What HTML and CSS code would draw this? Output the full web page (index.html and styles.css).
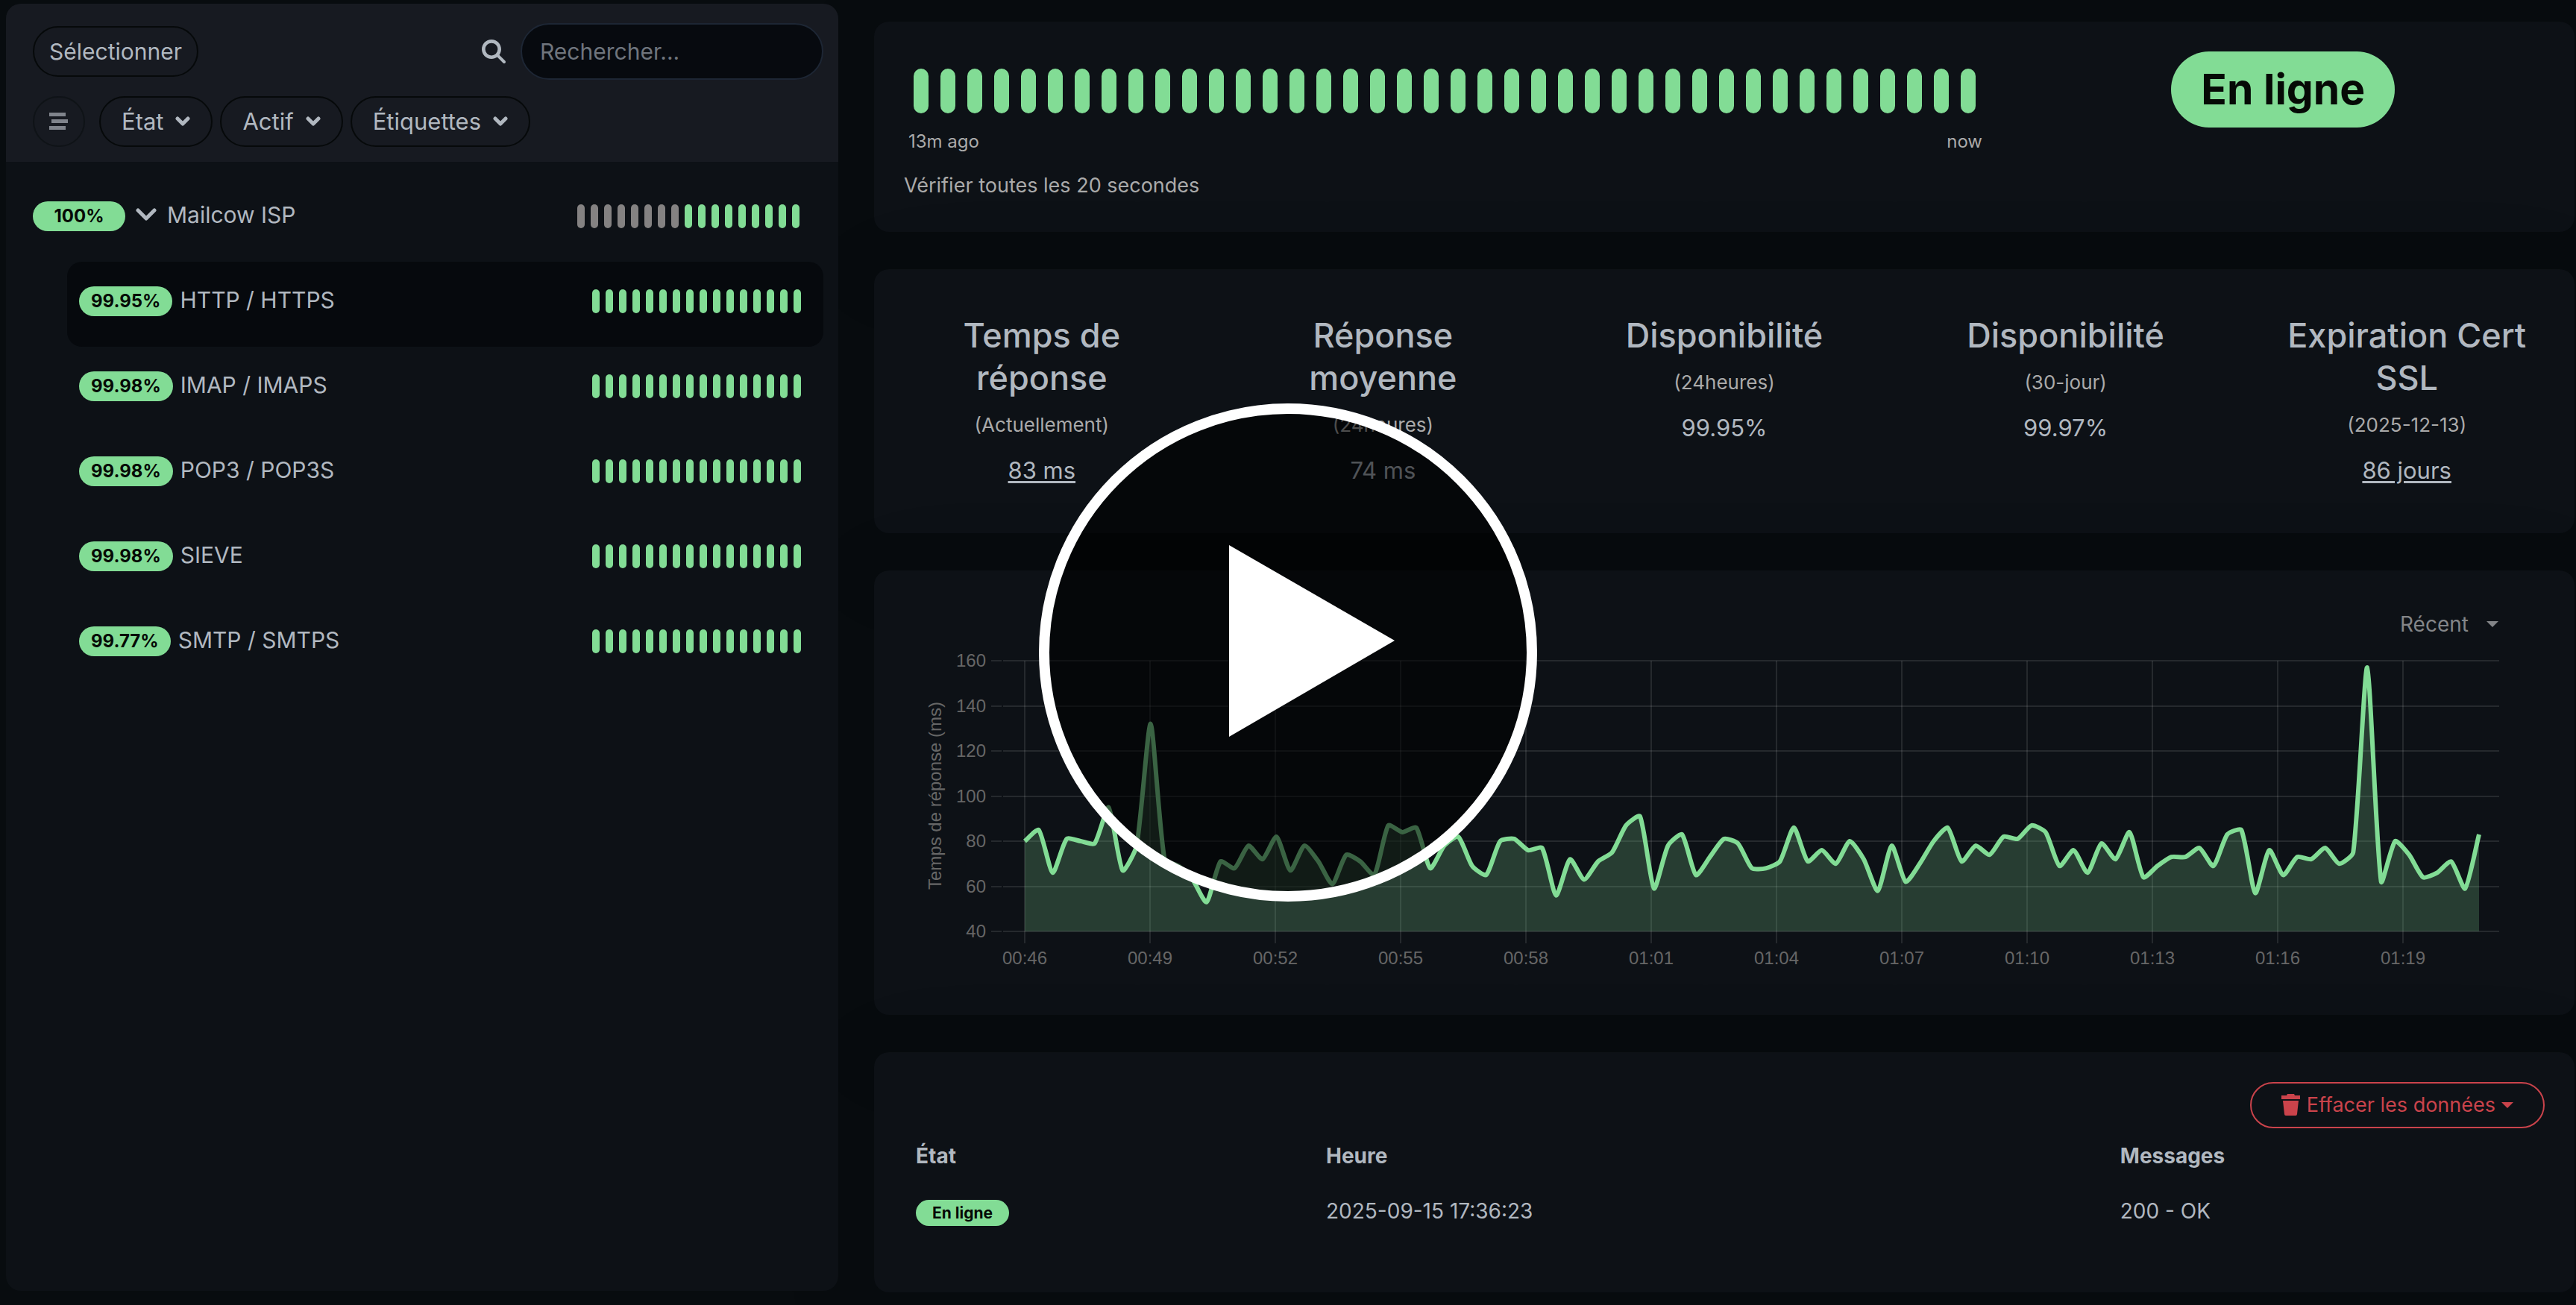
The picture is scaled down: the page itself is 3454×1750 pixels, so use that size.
FILE: index.html
```html
<!DOCTYPE html>
<html lang="fr">
<head>
<meta charset="utf-8">
<meta name="viewport" content="width=device-width, initial-scale=1">
<title>HTTP / HTTPS</title>
<link rel="stylesheet" href="styles.css">
</head>
<body>
<div class="layout">
  <aside class="sidebar">
    <header class="toolbar">
      <div class="toolbar-row">
        <button type="button" class="pill-btn pill-btn-select">Sélectionner</button>
        <form class="search" role="search">
          <label for="search" aria-label="Rechercher">
            <svg class="icon-search" viewBox="0 0 512 512"><path fill="currentColor" d="M416 208c0 45.900-14.900 88.300-40 122.700l126.600 126.700c12.500 12.500 12.500 32.800 0 45.300s-32.800 12.500-45.300 0L330.700 376C296.300 401.100 253.900 416 208 416 93.100 416 0 322.900 0 208S93.100 0 208 0s208 93.100 208 208zM208 342a134 134 0 1 0 0-268 134 134 0 1 0 0 268z"/></svg>
          </label>
          <input id="search" class="search-input" type="text" placeholder="Rechercher...">
        </form>
      </div>
      <div class="toolbar-row filters">
        <button type="button" class="pill-btn pill-btn-icon" aria-label="Trier">
          <svg class="icon-list" viewBox="0 0 28 24"><path fill="currentColor" d="M1 0h22v5H1zM4 9h22v5H4zM1 18h22v5H1z"/></svg>
        </button>
        <button type="button" class="pill-btn">État <svg class="chevron" viewBox="0 0 20 14"><path d="M3 3l7 7 7-7"/></svg></button>
        <button type="button" class="pill-btn">Actif <svg class="chevron" viewBox="0 0 20 14"><path d="M3 3l7 7 7-7"/></svg></button>
        <button type="button" class="pill-btn">Étiquettes <svg class="chevron" viewBox="0 0 20 14"><path d="M3 3l7 7 7-7"/></svg></button>
      </div>
    </header>
    <nav class="monitors">
      <a href="#" class="monitor monitor-group">
        <span class="uptime uptime-group">100%</span>
        <svg class="chevron chevron-group" viewBox="0 0 28 18"><path d="M3 3l11 11 11-11"/></svg>
        <span class="name">Mailcow ISP</span>
        <span class="beats" data-pending="8" data-up="9"></span>
      </a>
      <a href="#" class="monitor active"><span class="uptime">99.95%</span><span class="name">HTTP / HTTPS</span><span class="beats" data-up="16"></span></a>
      <a href="#" class="monitor"><span class="uptime">99.98%</span><span class="name">IMAP / IMAPS</span><span class="beats" data-up="16"></span></a>
      <a href="#" class="monitor"><span class="uptime">99.98%</span><span class="name">POP3 / POP3S</span><span class="beats" data-up="16"></span></a>
      <a href="#" class="monitor"><span class="uptime">99.98%</span><span class="name">SIEVE</span><span class="beats" data-up="16"></span></a>
      <a href="#" class="monitor"><span class="uptime">99.77%</span><span class="name">SMTP / SMTPS</span><span class="beats" data-up="16"></span></a>
    </nav>
  </aside>

  <main class="details">
    <section class="card status">
      <div class="history">
        <div class="beats beats-large" data-up="40"></div>
        <div class="range"><span>13m ago</span><span>now</span></div>
        <p class="interval">Vérifier toutes les 20 secondes</p>
      </div>
      <div class="status-side"><span class="status-badge">En ligne</span></div>
    </section>

    <section class="card stats">
      <div class="stats-row">
        <div class="stat"><h4>Temps de<br>réponse</h4><p class="note">(Actuellement)</p><a href="#" class="value">83 ms</a></div>
        <div class="stat"><h4>Réponse<br>moyenne</h4><p class="note">(24heures)</p><span class="value">74 ms</span></div>
        <div class="stat"><h4>Disponibilité</h4><p class="note">(24heures)</p><span class="value">99.95%</span></div>
        <div class="stat"><h4>Disponibilité</h4><p class="note">(30-jour)</p><span class="value">99.97%</span></div>
        <div class="stat"><h4>Expiration Cert<br>SSL</h4><p class="note">(2025-12-13)</p><a href="#" class="value">86 jours</a></div>
      </div>
    </section>

    <section class="card chart-card">
      <div class="period">
        <select class="period-select" aria-label="Période"><option>Récent</option></select>
        <svg class="caret" viewBox="0 0 16 8"><path fill="currentColor" d="M0 0h16L8 8z"/></svg>
      </div>
      <svg class="chart" id="chart" viewBox="0 0 2280 452" role="img" aria-label="Temps de réponse (ms)">
        <g id="grid" class="grid"></g>
        <path id="area" class="area"/>
        <path id="line" class="line"/>
        <g id="labels" class="labels"></g>
        <text class="axis-title" text-anchor="middle" transform="translate(90 208) rotate(-90)">Temps de réponse (ms)</text>
      </svg>
    </section>

    <section class="card events">
      <div class="events-actions">
        <button type="button" class="clear-btn">
          <svg class="icon-trash" viewBox="0 0 26 30"><path fill="currentColor" d="M8 0h9l1 2h7v5H0V2h7zM2 9h21l-2 18q0 2-2 2H6q-2 0-2-2z"/></svg>
          Effacer les données
          <svg class="caret" viewBox="0 0 16 8"><path fill="currentColor" d="M0 0h16L8 8z"/></svg>
        </button>
      </div>
      <table class="events-table">
        <colgroup><col class="col-state"><col class="col-time"><col></colgroup>
        <thead><tr><th>État</th><th>Heure</th><th>Messages</th></tr></thead>
        <tbody><tr><td><span class="event-badge">En ligne</span></td><td>2025-09-15 17:36:23</td><td>200 - OK</td></tr></tbody>
      </table>
    </section>
  </main>
</div>

<button type="button" class="play" aria-label="Lire la vidéo">
  <svg viewBox="0 0 668 668"><circle cx="334" cy="334" r="327" fill="#000" fill-opacity=".55" stroke="#fff" stroke-width="14"/><path fill="#fff" d="M255 190l222 128-222 129z"/></svg>
</button>
<script src="script.js"></script>
</body>
</html>
```
FILE: styles.css
```css
* { box-sizing: border-box; }

:root {
  --page: #080c0f;
  --card: #0d1116;
  --header: #171a21;
  --up: #82dc95;
  --pending: #848282;
  --text: #b1b8c0;
  --muted: #aaa;
  --danger: #ca434b;
}

body {
  margin: 0;
  background: var(--page);
  color: var(--text);
  font: 31px/48px Inter, "Liberation Sans", sans-serif;
}

button, input, select { font: inherit; color: inherit; }
a { color: inherit; text-decoration: none; }
h4, p { margin: 0; }
svg { display: block; flex: none; }

.layout {
  display: grid;
  grid-template-columns: minmax(0, 1116fr) minmax(0, 2280fr);
  gap: 48px;
  min-height: 100vh;
  padding: 5px 2px 17px 8px;
}

/* Sidebar */
.sidebar {
  position: relative;
  z-index: 1;
  margin-bottom: 2px;
  border-radius: 20px;
  background: var(--card);
  overflow: hidden;
}

.toolbar {
  display: flex;
  flex-direction: column;
  gap: 22px;
  padding: 26px 20px 20px 36px;
  background: var(--header);
}

.toolbar-row {
  display: flex;
  align-items: center;
  justify-content: space-between;
}

.filters { justify-content: flex-start; gap: 10px; }

.pill-btn {
  display: flex;
  align-items: center;
  gap: 16px;
  height: 68px;
  padding: 0 28px;
  border: 2px solid #06090a;
  border-radius: 34px;
  background: none;
  white-space: nowrap;
}

.pill-btn-select { padding: 0 20px; font-size: 30px; }

.pill-btn-icon {
  justify-content: center;
  width: 70px;
  margin-right: 9px;
  padding: 0;
  border-color: #0f1317;
  color: #80848c;
}

.icon-list { width: 28px; height: 24px; }

.chevron {
  width: 20px;
  height: 14px;
  fill: none;
  stroke: currentColor;
  stroke-width: 5;
  stroke-linecap: round;
  stroke-linejoin: round;
}

.search { display: flex; align-items: center; gap: 20px; }
.icon-search { width: 32px; height: 32px; }

.search-input {
  width: 406px;
  height: 76px;
  padding: 0 24px;
  border: 2px solid #1d2634;
  border-radius: 38px;
  background: #070a0f;
  font-size: 30px;
}

.search-input::placeholder { color: #6f757d; opacity: 1; }

.monitors { padding: 20px; }

.monitor {
  display: flex;
  align-items: center;
  gap: 10px;
  height: 114px;
  margin-left: 62px;
  padding: 0 30px 8px 16px;
  border-radius: 20px;
}

.monitor-group { gap: 14px; margin-left: 0; padding-right: 32px; }
.monitor.active { background: #06090d; }

.uptime {
  padding: 0 16px;
  border-radius: 20px;
  background: var(--up);
  color: #060a06;
  font-size: 24px;
  font-weight: 700;
  line-height: 40px;
}

.uptime-group { width: 124px; text-align: center; }
.chevron-group { width: 28px; height: 18px; margin-bottom: 4px; stroke-width: 5; }

.name { flex: 1; padding-bottom: 4px; font-size: 30px; }

.beats { display: flex; gap: 8px; }

.beat {
  width: 10px;
  height: 32px;
  border-radius: 5px;
  background: var(--up);
}

.beat-pending { background: var(--pending); }

/* Details */
.details {
  display: flex;
  flex-direction: column;
  gap: 50px;
  padding-top: 24px;
}

.card {
  border-radius: 20px;
  background: var(--card);
  box-shadow: 0 30px 140px rgba(0, 0, 0, .1);
}

.status {
  display: grid;
  grid-template-columns: 2fr 1fr;
  min-height: 282px;
  padding: 40px 16px;
}

.history { padding: 23px 24px 0; }
.beats-large { gap: 16px; padding-left: 13px; }
.beats-large .beat { width: 20px; height: 60px; border-radius: 10px; }

.range {
  display: flex;
  justify-content: space-between;
  max-width: 1446px;
  margin-top: 20px;
  padding-left: 6px;
  color: var(--muted);
  font-size: 24px;
  line-height: 36px;
}

.interval { margin-top: 20px; color: var(--muted); font-size: 27px; line-height: 42px; }

.status-side { text-align: center; }

.status-badge {
  display: inline-block;
  padding: 0 40px;
  border-radius: 51px;
  background: var(--up);
  color: #060a06;
  font-size: 57px;
  font-weight: 700;
  line-height: 102px;
}

.stats { padding: 60px 0; text-align: center; }

.stats-row {
  display: grid;
  grid-template-columns: repeat(5, minmax(0, 1fr));
  margin: 0 -4px;
}

.stat h4 { font-size: 45px; font-weight: 500; line-height: 57px; }
.stat .note { margin-top: 14px; color: var(--muted); font-size: 26px; line-height: 42px; }
.stat .value { display: block; margin-top: 16px; }
.stat a.value { text-decoration: underline; text-underline-offset: 3px; text-decoration-thickness: 3px; }

.chart-card { padding-bottom: 50px; }

.period {
  display: flex;
  align-items: center;
  justify-content: flex-end;
  gap: 24px;
  padding: 48px 102px 0 0;
  color: #838588;
}

.period-select {
  appearance: none;
  height: 42px;
  padding: 0;
  border: 0;
  background: none;
  font-size: 28px;
}

.caret { width: 16px; height: 8px; }
.period .caret { margin-top: 6px; }

.chart { width: 100%; height: auto; margin-top: 4px; }
.grid { stroke: #fff; stroke-opacity: .1; stroke-width: 2; }
.area { fill: var(--up); fill-opacity: .22; }
.line { fill: none; stroke: var(--up); stroke-width: 6; stroke-linejoin: round; }
.labels, .axis-title { fill: #666; font: 24px "Liberation Sans", Arial, sans-serif; }

.events { min-height: 322px; padding: 40px; }
.events-actions { display: flex; justify-content: flex-end; }

.clear-btn {
  display: flex;
  align-items: center;
  gap: 8px;
  height: 62px;
  padding: 0 40px;
  border: 2px solid var(--danger);
  border-radius: 31px;
  background: none;
  color: var(--danger);
  font-size: 27px;
}

.icon-trash { width: 26px; height: 30px; }

.events-table {
  width: 100%;
  border-collapse: collapse;
  table-layout: fixed;
  font-size: 28px;
  line-height: 42px;
}

.col-state { width: 25%; }
.col-time { width: 48.4%; }
.events-table th, .events-table td { padding: 16px; text-align: left; }

.event-badge {
  display: inline-block;
  padding: 0 22px;
  border-radius: 18px;
  background: var(--up);
  color: #060a06;
  font-size: 21px;
  font-weight: 700;
  line-height: 35px;
}

/* Video overlay */
.play {
  position: fixed;
  top: 50%;
  left: 50%;
  z-index: 2;
  width: 668px;
  height: 668px;
  padding: 0;
  border: 0;
  border-radius: 50%;
  background: none;
  transform: translate(-50%, -50%);
}
```
FILE: script.js
```js
// Heartbeat bars
document.querySelectorAll('.beats').forEach(function (el) {
  var pending = Number(el.dataset.pending || 0);
  var total = pending + Number(el.dataset.up);
  for (var i = 0; i < total; i++) {
    var beat = document.createElement('span');
    beat.className = i < pending ? 'beat beat-pending' : 'beat';
    el.appendChild(beat);
  }
});

// Response time chart
var values = [80, 85, 66, 81, 80, 79, 95, 67, 78, 132, 72, 69, 63, 53, 71, 68, 78, 72, 82, 67,
  78, 71, 61, 74, 71, 65, 87, 84, 86, 68, 78, 82, 69, 65, 80, 81, 76, 77, 56, 72,
  63, 71, 75, 87, 91, 59, 78, 83, 65, 73, 81, 79, 68, 68, 71, 86, 71, 76, 70, 80,
  72, 58, 78, 62, 70, 80, 86, 71, 78, 74, 82, 81, 87, 84, 69, 76, 66, 79, 72, 84,
  64, 69, 73, 73, 77, 69, 83, 85, 57, 76, 65, 73, 72, 77, 70, 75, 157, 62, 80, 74,
  64, 66, 71, 59, 83];
var times = ['00:46', '00:49', '00:52', '00:55', '00:58', '01:01', '01:04', '01:07', '01:10', '01:13', '01:16', '01:19'];
var left = 202, right = 2179, ceiling = 27, bottom = 390, step = 18.75;

function y(v) { return bottom - (v - 40) * (bottom - ceiling) / 120; }

function add(parent, name, attrs, text) {
  var el = document.createElementNS('http://www.w3.org/2000/svg', name);
  for (var key in attrs) el.setAttribute(key, attrs[key]);
  if (text) el.textContent = text;
  document.getElementById(parent).appendChild(el);
}

for (var v = 40; v <= 160; v += 20) {
  var gy = Math.round(y(v));
  add('grid', 'line', { x1: 157, x2: 171, y1: gy, y2: gy });
  add('grid', 'line', { x1: 173, x2: right, y1: gy, y2: gy });
  add('labels', 'text', { x: 150, y: gy + 8, 'text-anchor': 'end' }, String(v));
}
times.forEach(function (t, i) {
  var gx = left + i * 168;
  add('grid', 'line', { x1: gx, x2: gx, y1: ceiling, y2: bottom + 16 });
  add('labels', 'text', { x: gx, y: bottom + 44, 'text-anchor': 'middle' }, t);
});

var pts = values.map(function (v, i) { return [left + i * step, y(v)]; });
var tension = 0.2;
function control(i, sign) {
  var p = pts[i], a = pts[Math.max(i - 1, 0)], b = pts[Math.min(i + 1, pts.length - 1)];
  var before = Math.hypot(p[0] - a[0], p[1] - a[1]), after = Math.hypot(b[0] - p[0], b[1] - p[1]);
  var k = tension * (sign > 0 ? after : before) / (before + after) * sign;
  return [p[0] + (b[0] - a[0]) * k, p[1] + (b[1] - a[1]) * k];
}
var d = 'M' + pts[0].join(' ');
for (var i = 1; i < pts.length; i++) {
  d += 'C' + [control(i - 1, 1), control(i, -1), pts[i]].map(function (p) { return p.join(' '); }).join(',');
}
document.getElementById('line').setAttribute('d', d);
document.getElementById('area').setAttribute('d', d + 'V' + bottom + 'H' + left + 'Z');
```
